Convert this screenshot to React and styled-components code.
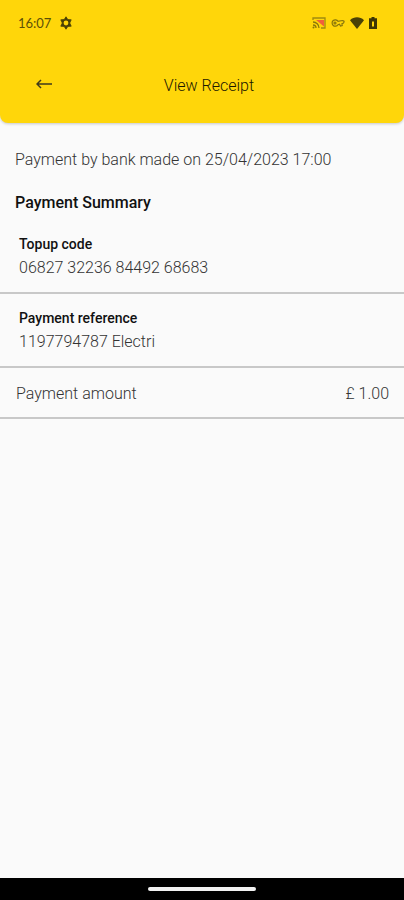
import React from 'react';
import styled, {createGlobalStyle} from 'styled-components';


const receipt = {
    method: 'bank',
    date: '25/04/2023 17:00',
    details: [
        {label: 'Topup code', value: '06827 32236 84492 68683'},
        {label: 'Payment reference', value: '1197794787 Electri'},
    ],
    amount: '£ 1.00',
};

const App = () => {
    return (
        <Container>
            <GlobalStyle/>
            <Header>
                <StatusBar>
                    <Clock>16:07</Clock>
                    <GearIcon/>
                    <StatusIcons>
                        <CastIcon/>
                        <KeyIcon/>
                        <WifiIcon/>
                        <BatteryIcon/>
                    </StatusIcons>
                </StatusBar>
                <TitleBar>
                    <BackButton type='button' aria-label='Back'>
                        <ArrowIcon/>
                    </BackButton>
                    <h1>View Receipt</h1>
                </TitleBar>
            </Header>

            <Content>
                <Intro>Payment by {receipt.method} made on {receipt.date}</Intro>
                <SummaryTitle>Payment Summary</SummaryTitle>
                <DetailList>
                    {receipt.details.map(({label, value}) => (
                        <DetailRow key={label}>
                            <dt>{label}</dt>
                            <dd>{value}</dd>
                        </DetailRow>
                    ))}
                    <AmountRow>
                        <dt>Payment amount</dt>
                        <dd>{receipt.amount}</dd>
                    </AmountRow>
                </DetailList>
            </Content>

            <NavBar>
                <HomeHandle/>
            </NavBar>
        </Container>
    );
};


export default App;

const GearIcon = () => (
    <svg width='12' height='14' viewBox='0 0 12 14'>
        <path d='M6 .8L7.800 3.600L11.200 3.800L9.700 7L11.200 10.200L7.800 10.400L6 13.200L4.200 10.400L.8 10.200L2.300 7L.8 3.800L4.200 3.600z' fill='#4a4106' stroke='#4a4106' strokeWidth='.8' strokeLinejoin='round'/>
        <circle cx='6' cy='7' r='2.400' fill='#ffd60a'/>
    </svg>
);

const CastIcon = () => (
    <svg width='14' height='12' viewBox='0 0 14 12' fill='none'>
        <path d='M1 3V1h12v10H9' stroke='#a08a10' strokeWidth='1.300'/>
        <path d='M4 3h8v6.500z' fill='#f0603c'/>
        <path d='M1 5a6 6 0 0 1 6 6M1 8a3 3 0 0 1 3 3' stroke='#8a770c' strokeWidth='1.300'/>
        <circle cx='1.500' cy='10.500' r='1' fill='#8a770c'/>
    </svg>
);

const KeyIcon = () => (
    <svg width='14' height='8' viewBox='0 0 14 8' fill='none' stroke='#87750c' strokeWidth='1.200'>
        <path d='M7 2.300A3.200 3.200 0 1 0 7 5.700L8.500 5.200L9.500 7L11.200 6.500L11 4.700C13.500 4.300 13.800 1.600 11.500 1.500z'/>
        <circle cx='4' cy='4' r='1'/>
    </svg>
);

const WifiIcon = () => (
    <svg width='14' height='12' viewBox='0 0 14 12' fill='#4a4106'>
        <path d='M0 3.200C4 -.6 10 -.6 14 3.200L7 12z'/>
    </svg>
);

const BatteryIcon = () => (
    <svg width='8' height='12' viewBox='0 0 8 12' fill='#3d3605' fillRule='evenodd'>
        <path d='M2.500 0h3v1.300H8V12H0V1.300h2.500zM3 4.500v5h2v-5z'/>
    </svg>
);

const ArrowIcon = () => (
    <svg width='16' height='10' viewBox='0 0 16 10' fill='none' stroke='#3f3a1c' strokeWidth='1.500'>
        <path d='M16 5H1.500M5 1L1 5l4 4'/>
    </svg>
);

const GlobalStyle = createGlobalStyle`
  * {
    box-sizing: border-box;
    margin: 0;
    padding: 0;
  }

  body {
    font-family: Roboto, "Liberation Sans", sans-serif;
    font-size: 16px;
    background-color: #fafafa;
  }
`

const Container = styled.div`
  min-height: 100vh;
  display: flex;
  flex-direction: column;
  background-color: #fafafa;
  color: #333;
`

const Header = styled.header`
  padding-bottom: 17px;
  border-radius: 0 0 8px 8px;
  background-color: #ffd60a;
  box-shadow: 0 1px 3px rgba(0, 0, 0, 0.2);
`

const StatusBar = styled.div`
  display: flex;
  align-items: center;
  height: 46px;
  padding: 0 27px 0 18px;
`

const Clock = styled.span`
  margin-right: 9px;
  font-family: Lato, Roboto, sans-serif;
  font-size: 13px;
  color: #5c5008;
`

const StatusIcons = styled.div`
  display: flex;
  align-items: center;
  gap: 5px;
  margin-left: auto;
`

const TitleBar = styled.div`
  display: grid;
  grid-template-columns: 60px 1fr 46px;
  align-items: center;
  height: 60px;
  padding-top: 20px;

  h1 {
    font-size: 16px;
    font-weight: 300;
    line-height: 20px;
    text-align: center;
    color: #1c1800;
  }
`

const BackButton = styled.button`
  display: flex;
  justify-content: flex-end;
  padding: 8px 8px 12px;
  border: none;
  background: none;
  cursor: pointer;
`

const Content = styled.main`
  flex: 1;
`

const Intro = styled.p`
  padding: 27px 15px 0;
  font-weight: 300;
  line-height: 20px;
`

const SummaryTitle = styled.h2`
  padding: 23px 15px 14px;
  font-size: 16px;
  font-weight: 500;
  line-height: 20px;
  color: #111;
`

const DetailList = styled.dl`
  width: 100%;
`

const DetailRow = styled.div`
  padding: 7px 19px 10px;
  border-bottom: 2px solid #c8c8c8;

  & + & {
    padding-top: 14px;
  }

  dt {
    font-size: 14px;
    font-weight: 500;
    line-height: 20px;
    color: #111;
  }

  dd {
    font-weight: 300;
    line-height: 28px;
  }
`

const AmountRow = styled.div`
  display: flex;
  justify-content: space-between;
  padding: 16px 15px 13px 16px;
  border-bottom: 2px solid #c8c8c8;
  font-weight: 300;
  line-height: 20px;
`

const NavBar = styled.footer`
  display: flex;
  justify-content: center;
  align-items: center;
  height: 22px;
  background-color: #000;
`

const HomeHandle = styled.div`
  width: 108px;
  height: 4px;
  border-radius: 2px;
  background-color: #f2f2f2;
`
